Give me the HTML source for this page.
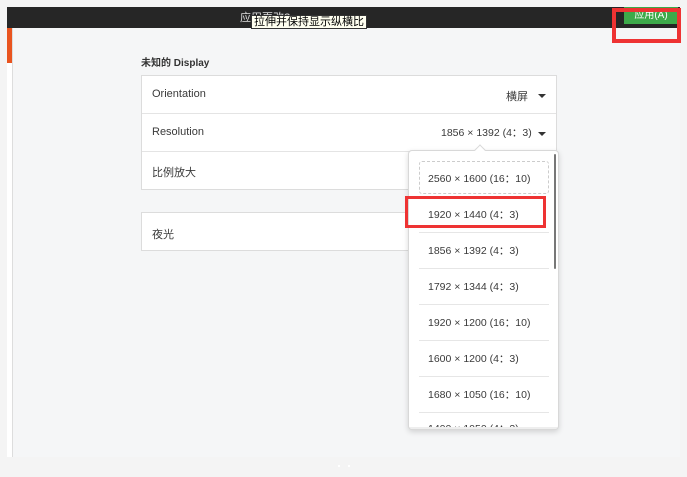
<!DOCTYPE html>
<html><head><meta charset="utf-8"><style>
*{margin:0;padding:0;box-sizing:border-box}
body{width:687px;height:477px;background:#f4f4f4;position:relative;overflow:hidden;font-family:"Liberation Sans","Noto Sans CJK SC",sans-serif;color:#333}
.abs{position:absolute}
.txt{font-size:11px;color:#3a3a3a}
.row{position:absolute;left:0;right:0;height:38px;border-bottom:1px solid #e4e4e4}
.row span{position:absolute;top:12px}
.tri{position:absolute;width:0;height:0;border-left:4px solid transparent;border-right:4px solid transparent;border-top:4px solid #333}
.item{position:absolute;left:19px;width:130px;font-size:10.5px;color:#3a3a3a;white-space:nowrap}
.sep{position:absolute;left:10px;width:130px;height:1px;background:#e6e6e6}
</style></head><body>
<div class="abs" style="left:7px;top:7px;width:673px;height:450px;background:#f5f6f7"></div>
<div class="abs" style="left:7px;top:28px;width:5px;height:429px;background:#fff"></div>
<div class="abs" style="left:7px;top:28px;width:5px;height:35px;background:#e9541f"></div>
<div class="abs" style="left:12px;top:28px;width:1px;height:429px;background:#ddd"></div>
<div class="abs" style="left:7px;top:7px;width:673px;height:21px;background:#262626"></div>
<div class="abs" style="left:240px;top:9px;font-size:11px;color:#ddd">应用更改?</div>
<div class="abs" style="left:251px;top:15px;height:14px;padding:0 2px;background:#fffff0;border:1px solid #333;font-size:11px;line-height:12px;color:#000">拉伸并保持显示纵横比</div>
<div class="abs" style="left:624px;top:7px;width:54px;height:17px;background:#3daa4a;color:#fff;font-size:10px;text-align:center;line-height:17px">应用(A)</div>
<div class="abs" style="left:612px;top:8px;width:69px;height:35px;border:4px solid #ee3333"></div>
<div class="abs" style="left:141px;top:54px;font-size:10px;font-weight:bold;color:#333">未知的 Display</div>
<div class="abs" style="left:141px;top:75px;width:416px;height:115px;background:#fff;border:1px solid #dcdcdc">
 <div class="row txt" style="top:0"><span style="left:10px;top:12px">Orientation</span><span style="left:364px;top:12px">横屏</span><div class="tri" style="left:396px;top:18px"></div></div>
 <div class="row txt" style="top:38px"><span style="left:10px;top:12px">Resolution</span><span style="left:299px;top:11px;font-size:10.5px">1856 × 1392 (4：3)</span><div class="tri" style="left:396px;top:18px"></div></div>
 <div class="row txt" style="top:76px;border:none"><span style="left:10px">比例放大</span></div>
</div>
<div class="abs txt" style="left:141px;top:212px;width:416px;height:39px;background:#fff;border:1px solid #dcdcdc"><span class="abs" style="left:10px;top:13px">夜光</span></div>
<div class="abs" style="left:408px;top:150px;width:151px;height:280px;background:#fff;border:1px solid #d8d8d8;border-radius:4px;box-shadow:0 2px 6px rgba(0,0,0,.15);overflow:hidden">
 <div class="abs" style="left:10px;top:10px;width:130px;height:33px;border:1px dashed #ccc;border-radius:3px"></div>
 <div class="item" style="top:20px">2560 × 1600 (16：10)</div>
 <div class="item" style="top:56px">1920 × 1440 (4：3)</div>
 <div class="sep" style="top:81px"></div>
 <div class="item" style="top:92px">1856 × 1392 (4：3)</div>
 <div class="sep" style="top:117px"></div>
 <div class="item" style="top:128px">1792 × 1344 (4：3)</div>
 <div class="sep" style="top:153px"></div>
 <div class="item" style="top:164px">1920 × 1200 (16：10)</div>
 <div class="sep" style="top:189px"></div>
 <div class="item" style="top:200px">1600 × 1200 (4：3)</div>
 <div class="sep" style="top:225px"></div>
 <div class="item" style="top:236px">1680 × 1050 (16：10)</div>
 <div class="sep" style="top:261px"></div>
 <div class="item" style="top:270px">1400 × 1050 (4：3)</div>
 <div class="abs" style="left:0;top:276px;width:151px;height:4px;background:#eee"></div>
 <div class="abs" style="left:145px;top:3px;width:2px;height:115px;background:#777;border-radius:1px"></div>
</div>
<div class="abs" style="left:476px;top:146px;width:8px;height:8px;background:#fff;border-left:1px solid #d8d8d8;border-top:1px solid #d8d8d8;transform:rotate(45deg)"></div>
<div class="abs" style="left:405px;top:196px;width:141px;height:32px;border:3px solid #ee3333"></div>
<div class="abs" style="left:338px;top:465px;width:2px;height:2px;background:#fff"></div>
<div class="abs" style="left:348px;top:465px;width:2px;height:2px;background:#fff"></div>
</body></html>
